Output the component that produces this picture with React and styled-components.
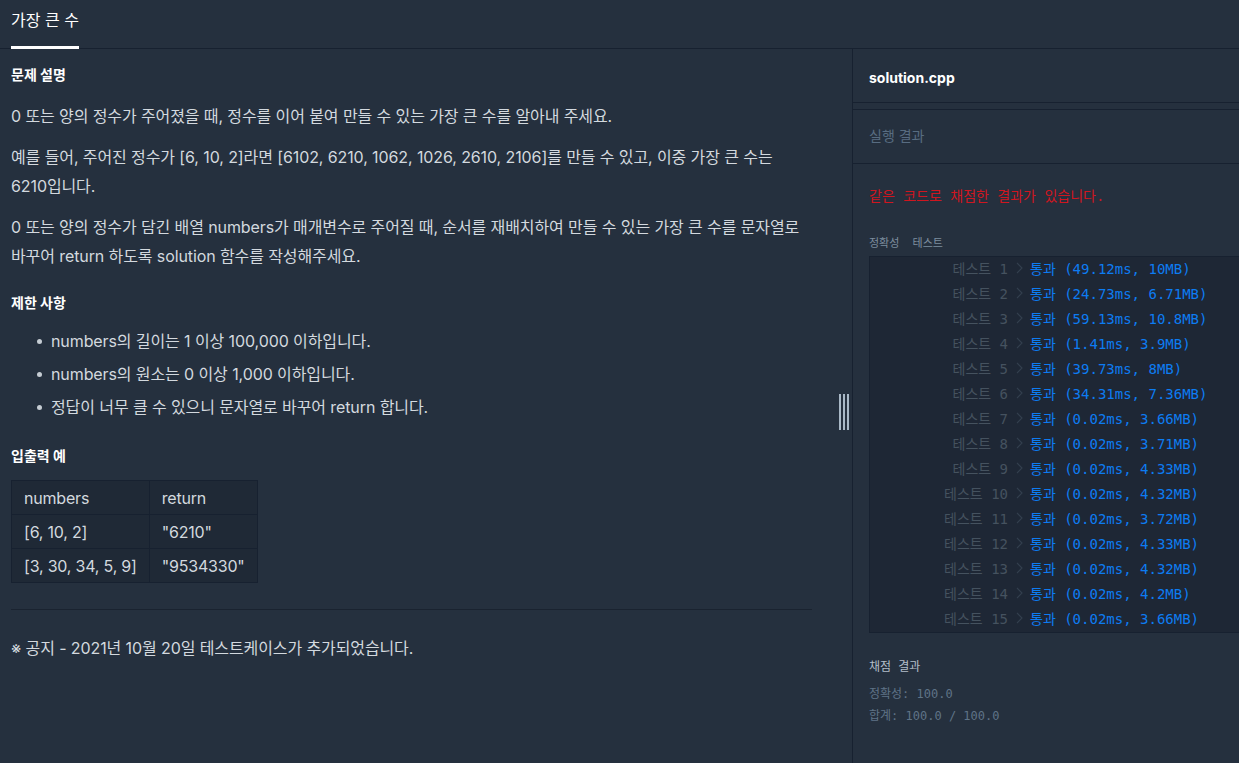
import React from 'react';
import styled, { createGlobalStyle } from 'styled-components';

const GlobalStyle = createGlobalStyle`
  html, body, #root { height: 100%; }
  body {
    margin: 0;
    background: #25303e;
    overflow: hidden;
    font-family: Inter, "Noto Sans CJK KR", sans-serif;
    -webkit-font-smoothing: antialiased;
  }
  * { box-sizing: border-box; }
`;

const Page = styled.div`
  height: 100%;
  display: flex;
  flex-direction: column;
`;

const TopBar = styled.header`
  height: 49px;
  flex: none;
  display: flex;
  align-items: flex-start;
  padding-left: 11px;
  border-bottom: 1px solid #172130;
`;

const Tab = styled.div`
  height: 49px;
  padding-top: 10px;
  line-height: 20px;
  font-size: 16px;
  color: #ffffff;
  border-bottom: 3px solid #ffffff;
`;

const Body = styled.div`
  flex: 1;
  min-height: 0;
  display: grid;
  grid-template-columns: 852px 1fr;
`;

const LeftPanel = styled.section`
  position: relative;
  overflow: hidden;
  padding: 16px 40px 0 11px;
  display: flex;
  flex-direction: column;
`;

const Title = styled.h5`
  margin: ${(p) => p.$top || 0}px 0 ${(p) => p.$bottom || 16}px;
  font-size: 14px;
  line-height: 20px;
  font-weight: 700;
  color: #ffffff;
`;

const Para = styled.p`
  margin: 0 0 12px;
  font-size: 16px;
  line-height: 29px;
  color: #d3d9df;
  letter-spacing: -0.1px;
`;

const List = styled.ul`
  margin: 0 0 8px;
  padding-left: 40px;
  list-style: none;
`;

const Item = styled.li`
  position: relative;
  margin-bottom: 8px;
  font-size: 16px;
  line-height: 25px;
  color: #d3d9df;
  letter-spacing: -0.1px;
  &::before {
    content: '';
    position: absolute;
    left: -14px;
    top: 10px;
    width: 5px;
    height: 5px;
    border-radius: 50%;
    background: #c5ccd3;
  }
`;

const Table = styled.table`
  border-collapse: collapse;
  align-self: flex-start;
  background: #1f2936;
`;

const Cell = styled.td`
  height: 34px;
  padding: 0 12px;
  border: 1px solid #172130;
  font-size: 16px;
  color: #d3d9df;
  white-space: nowrap;
  letter-spacing: -0.2px;
`;

const Rule = styled.hr`
  margin: 26px 0 24px;
  border: none;
  border-top: 1px solid #1a2330;
  width: 100%;
`;

const Resizer = styled.div`
  position: absolute;
  right: 3px;
  top: 345px;
  display: flex;
  gap: 2px;
`;

const ResizerBar = styled.span`
  width: 2px;
  height: 36px;
  background: #a9b8c6;
`;

const RightPanel = styled.aside`
  border-left: 1px solid #172130;
  overflow: hidden;
  display: flex;
  flex-direction: column;
`;

const FileBar = styled.div`
  height: 54px;
  flex: none;
  display: flex;
  align-items: center;
  padding: 3px 16px 0;
  border-bottom: 1px solid #172130;
  font-size: 14px;
  font-weight: 700;
  color: #ffffff;
`;

const ResultHead = styled.div`
  height: 55px;
  flex: none;
  margin-top: 6px;
  display: flex;
  align-items: center;
  padding: 0 16px 4px;
  border-top: 1px solid #172130;
  border-bottom: 1px solid #172130;
  font-size: 14px;
  color: #586c81;
`;

const Console = styled.div`
  padding: 22px 16px 0;
  font-family: "DejaVu Sans Mono", "Noto Sans CJK KR", monospace;
`;

const Alert = styled.div`
  font-size: 14px;
  line-height: 20px;
  color: #d0161f;
  white-space: pre;
`;

const Caption = styled.div`
  margin-top: 30px;
  font-size: 11px;
  line-height: 16px;
  color: #7d8e9f;
  white-space: pre;
`;

const TestBox = styled.div`
  margin-top: 4px;
  width: 400px;
  background: #1e2735;
  border: 1px solid #172130;
`;

const TestRow = styled.div`
  height: 25px;
  padding-bottom: 3px;
  display: grid;
  grid-template-columns: 138px 22px auto;
  align-items: center;
  font-size: 14px;
  white-space: pre;
`;

const TestLabel = styled.span`
  text-align: right;
  color: #45525f;
`;

const Arrow = styled.span`
  display: flex;
  justify-content: center;
`;

const TestResult = styled.span`
  color: #0d7cf2;
`;

const Summary = styled.div`
  margin-top: ${(p) => p.$top}px;
  font-size: 12px;
  line-height: 16px;
  color: ${(p) => (p.$strong ? '#b3bec9' : '#5f7387')};
  white-space: pre;
`;

const tests = [
  ['1', '(49.12ms, 10MB)'],
  ['2', '(24.73ms, 6.71MB)'],
  ['3', '(59.13ms, 10.8MB)'],
  ['4', '(1.41ms, 3.9MB)'],
  ['5', '(39.73ms, 8MB)'],
  ['6', '(34.31ms, 7.36MB)'],
  ['7', '(0.02ms, 3.66MB)'],
  ['8', '(0.02ms, 3.71MB)'],
  ['9', '(0.02ms, 4.33MB)'],
  ['10', '(0.02ms, 4.32MB)'],
  ['11', '(0.02ms, 3.72MB)'],
  ['12', '(0.02ms, 4.33MB)'],
  ['13', '(0.02ms, 4.32MB)'],
  ['14', '(0.02ms, 4.2MB)'],
  ['15', '(0.02ms, 3.66MB)'],
];

const Chevron = () => (
  <svg width="7" height="12" viewBox="0 0 7 12" fill="none">
    <polyline points="1,1 6,6 1,11" stroke="#333f4e" strokeWidth="1.1" />
  </svg>
);

export default function App() {
  return (
    <Page>
      <GlobalStyle />
      <TopBar>
        <Tab>가장 큰 수</Tab>
      </TopBar>
      <Body>
        <LeftPanel>
          <Title $bottom={17}>문제 설명</Title>
          <Para>0 또는 양의 정수가 주어졌을 때, 정수를 이어 붙여 만들 수 있는 가장 큰 수를 알아내 주세요.</Para>
          <Para>예를 들어, 주어진 정수가 [6, 10, 2]라면 [6102, 6210, 1062, 1026, 2610, 2106]를 만들 수 있고, 이중 가장 큰 수는 6210입니다.</Para>
          <Para>0 또는 양의 정수가 담긴 배열 numbers가 매개변수로 주어질 때, 순서를 재배치하여 만들 수 있는 가장 큰 수를 문자열로 바꾸어 return 하도록 solution 함수를 작성해주세요.</Para>
          <Title $top={10} $bottom={16}>제한 사항</Title>
          <List>
            <Item>numbers의 길이는 1 이상 100,000 이하입니다.</Item>
            <Item>numbers의 원소는 0 이상 1,000 이하입니다.</Item>
            <Item>정답이 너무 클 수 있으니 문자열로 바꾸어 return 합니다.</Item>
          </List>
          <Title $top={10} $bottom={14}>입출력 예</Title>
          <Table>
            <tbody>
              <tr><Cell>numbers</Cell><Cell>return</Cell></tr>
              <tr><Cell>[6, 10, 2]</Cell><Cell>"6210"</Cell></tr>
              <tr><Cell>[3, 30, 34, 5, 9]</Cell><Cell>"9534330"</Cell></tr>
            </tbody>
          </Table>
          <Rule />
          <Para>※ 공지 - 2021년 10월 20일 테스트케이스가 추가되었습니다.</Para>
          <Resizer>
            <ResizerBar />
            <ResizerBar />
            <ResizerBar />
          </Resizer>
        </LeftPanel>
        <RightPanel>
          <FileBar>solution.cpp</FileBar>
          <ResultHead>실행 결과</ResultHead>
          <Console>
            <Alert>같은 코드로 채점한 결과가 있습니다.</Alert>
            <Caption>정확성  테스트</Caption>
            <TestBox>
              {tests.map(([n, r]) => (
                <TestRow key={n}>
                  <TestLabel>{`테스트 ${n}`}</TestLabel>
                  <Arrow><Chevron /></Arrow>
                  <TestResult>{`통과 ${r}`}</TestResult>
                </TestRow>
              ))}
            </TestBox>
            <Summary $top={26} $strong>채점 결과</Summary>
            <Summary $top={11}>정확성: 100.0</Summary>
            <Summary $top={6}>합계: 100.0 / 100.0</Summary>
          </Console>
        </RightPanel>
      </Body>
    </Page>
  );
}
